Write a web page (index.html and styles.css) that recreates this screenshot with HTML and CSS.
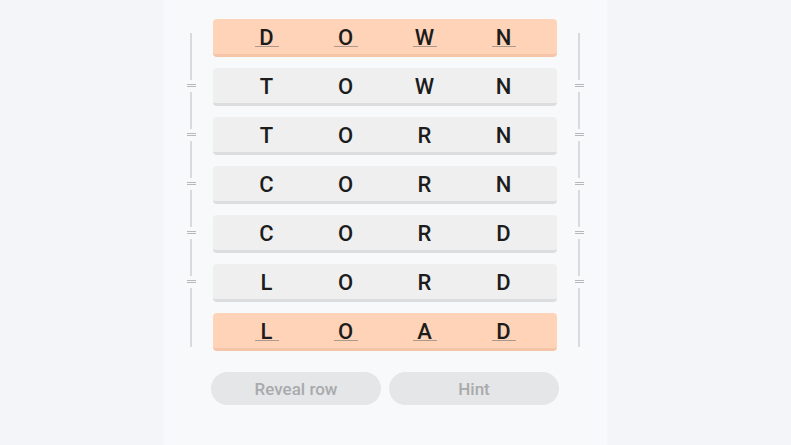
FILE: index.html
```html
<!DOCTYPE html>
<html lang="en">
<head>
    <meta charset="UTF-8">
    <meta name="viewport" content="width=device-width, initial-scale=1.0">
    <title>Word Ladder</title>
    <link rel="stylesheet" href="styles.css">
</head>
<body>
    <div class="panel">
        <div class="board">
            <div class="rail">
                <span class="seg first"></span>
                <span class="eq"></span>
                <span class="seg"></span>
                <span class="eq"></span>
                <span class="seg"></span>
                <span class="eq"></span>
                <span class="seg"></span>
                <span class="eq"></span>
                <span class="seg"></span>
                <span class="eq"></span>
                <span class="seg last"></span>
            </div>
            <div class="rows">
                <div class="row fixed"><span>D</span><span>O</span><span>W</span><span>N</span></div>
                <div class="row"><span>T</span><span>O</span><span>W</span><span>N</span></div>
                <div class="row"><span>T</span><span>O</span><span>R</span><span>N</span></div>
                <div class="row"><span>C</span><span>O</span><span>R</span><span>N</span></div>
                <div class="row"><span>C</span><span>O</span><span>R</span><span>D</span></div>
                <div class="row"><span>L</span><span>O</span><span>R</span><span>D</span></div>
                <div class="row fixed"><span>L</span><span>O</span><span>A</span><span>D</span></div>
            </div>
            <div class="rail">
                <span class="seg first"></span>
                <span class="eq"></span>
                <span class="seg"></span>
                <span class="eq"></span>
                <span class="seg"></span>
                <span class="eq"></span>
                <span class="seg"></span>
                <span class="eq"></span>
                <span class="seg"></span>
                <span class="eq"></span>
                <span class="seg last"></span>
            </div>
        </div>
        <div class="actions">
            <button>Reveal row</button>
            <button>Hint</button>
        </div>
    </div>
</body>
</html>
```

FILE: styles.css
```css
html, body {
    margin: 0;
    height: 100%;
}
body {
    background: #f3f5f8;
    font-family: Roboto, "Noto Sans", sans-serif;
    color: #1c1c1c;
}
.panel {
    width: 444px;
    height: 100%;
    margin-left: 163px;
    background: #f8f9fb;
    padding: 19px 20px 0;
    box-sizing: border-box;
}
.board {
    display: flex;
    gap: 14px;
}
.rail {
    width: 16px;
    display: flex;
    flex-direction: column;
    align-items: center;
    padding-top: 14px;
}
.seg {
    width: 2px;
    height: 37px;
    background: #d9dadd;
}
.seg.first {
    height: 47px;
}
.seg.last {
    height: 59px;
}
.eq {
    width: 9px;
    height: 1px;
    margin: 4px 0 5px;
    border-top: 1px solid #b7b8bb;
    border-bottom: 1px solid #b7b8bb;
}
.rows {
    flex: 1;
    display: flex;
    flex-direction: column;
    gap: 11px;
}
.row {
    height: 35px;
    display: grid;
    grid-template-columns: repeat(4, 1fr);
    padding: 0 14px;
    background: #efeff0;
    border-bottom: 3px solid #dcdddf;
    border-radius: 4px;
}
.row span {
    position: relative;
    display: flex;
    align-items: center;
    justify-content: center;
    font-size: 22px;
    font-weight: 500;
    padding-top: 1px;
}
.row.fixed {
    background: #ffd3b7;
    border-bottom-color: #f6c4a6;
}
.row.fixed span::after {
    content: "";
    position: absolute;
    left: 50%;
    bottom: 7px;
    width: 24px;
    height: 1.5px;
    margin-left: -12px;
    background: #9a8a80;
    opacity: 0.8;
}
.actions {
    display: flex;
    gap: 8px;
    margin-top: 21px;
    padding-left: 28px;
}
.actions button {
    width: 170px;
    height: 33px;
    border: none;
    border-radius: 17px;
    background: #e5e6e8;
    color: #a9aaac;
    font-family: Roboto, "Noto Sans", sans-serif;
    font-size: 17px;
    font-weight: 500;
}
```
